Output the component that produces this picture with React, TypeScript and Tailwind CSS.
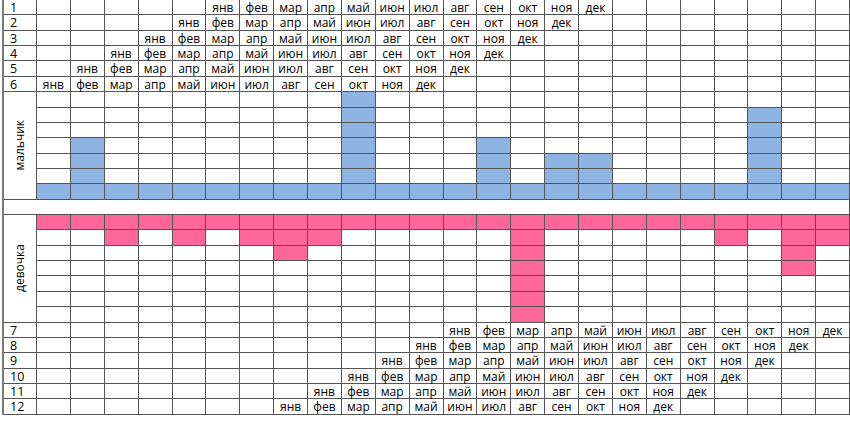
import React from 'react';

const MONTHS = ['янв', 'фев', 'мар', 'апр', 'май', 'июн', 'июл', 'авг', 'сен', 'окт', 'ноя', 'дек'];
const COLS = 24;

// first column (1-based) where "янв" sits for each numbered row
const TOP_ROWS = [
  { label: '1', start: 6 },
  { label: '2', start: 5 },
  { label: '3', start: 4 },
  { label: '4', start: 3 },
  { label: '5', start: 2 },
  { label: '6', start: 1 },
];

const BOTTOM_ROWS = [
  { label: '7', start: 13 },
  { label: '8', start: 12 },
  { label: '9', start: 11 },
  { label: '10', start: 10 },
  { label: '11', start: 9 },
  { label: '12', start: 8 },
];

// how many cells are filled in each column (boy: from bottom, girl: from top)
const BOY: Record<number, number> = { 2: 4, 10: 7, 14: 4, 16: 3, 17: 3, 22: 6 };
const GIRL: Record<number, number> = { 3: 2, 5: 2, 7: 2, 8: 3, 9: 2, 15: 7, 21: 2, 23: 4, 24: 2 };

const cell = 'border-r border-b border-[#555555]';

function MonthRow({ label, start }: { label: string; start: number }) {
  return (
    <>
      <div className={`${cell} pl-[6px] text-[12.5px] leading-[15px] text-black`}>{label}</div>
      {Array.from({ length: COLS }, (_, i) => {
        const col = i + 1;
        const idx = col - start;
        const text = idx >= 0 && idx < 12 ? MONTHS[idx] : '';
        return (
          <div key={col} className={`${cell} text-center text-[12px] leading-[15px] text-black`}>
            {text}
          </div>
        );
      })}
    </>
  );
}

function ChartBlock({ label, kind }: { label: string; kind: 'boy' | 'girl' }) {
  const rows = 7;
  return (
    <>
      <div className={`${cell} row-span-7 flex items-center justify-center`}>
        <span className="rotate-180 text-[12px] text-black [writing-mode:vertical-rl]">{label}</span>
      </div>
      {Array.from({ length: rows }, (_, r) =>
        Array.from({ length: COLS }, (_, i) => {
          const col = i + 1;
          let filled = false;
          if (kind === 'boy') {
            const h = BOY[col] ?? 1;
            filled = r >= rows - h;
          } else {
            const d = GIRL[col] ?? 1;
            filled = r < d;
          }
          const bg = filled ? (kind === 'boy' ? 'bg-[#8db4e2]' : 'bg-[#ff6699]') : 'bg-white';
          return <div key={`${r}-${col}`} className={`${cell} ${bg}`} />;
        })
      )}
    </>
  );
}

export default function App() {
  return (
    <div
      className="w-[850px] h-[433px] overflow-hidden bg-white pl-[2px]"
      style={{ fontFamily: '"Open Sans", "Noto Sans", sans-serif' }}
    >
      <div className="grid w-[886px] grid-cols-[33px_repeat(24,33.875px)] grid-rows-[repeat(27,15.37px)] border-l-2 border-[#7a7a7a]">
        {TOP_ROWS.map((r) => (
          <MonthRow key={r.label} label={r.label} start={r.start} />
        ))}
        <ChartBlock label="мальчик" kind="boy" />
        <div className={`${cell} col-span-full`} />
        <ChartBlock label="девочка" kind="girl" />
        {BOTTOM_ROWS.map((r) => (
          <MonthRow key={r.label} label={r.label} start={r.start} />
        ))}
      </div>
    </div>
  );
}
